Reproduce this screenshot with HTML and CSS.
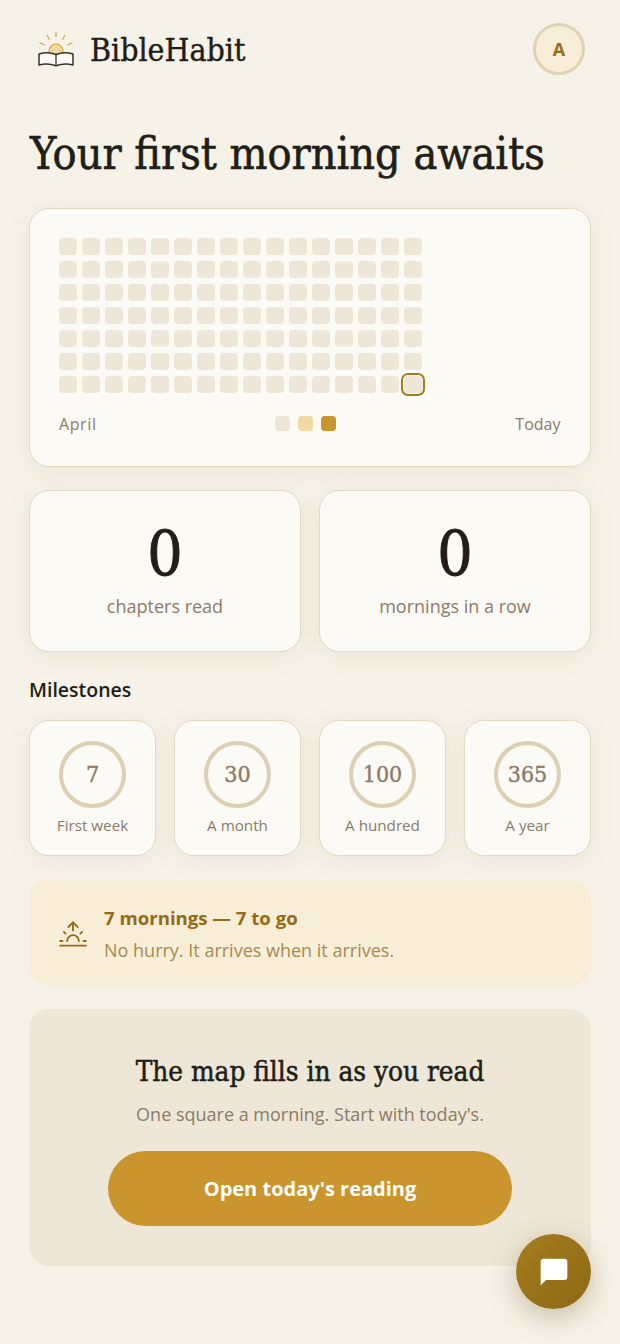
FILE: index.html
```html
<!DOCTYPE html>
<html lang="en">
  <head>
    <meta charset="UTF-8" />
    <meta name="viewport" content="width=device-width, initial-scale=1.0" />
    <title>BibleHabit</title>
    <link rel="stylesheet" href="styles.css">
  </head>
  <body>
    <div class="page">
      <header class="top-bar">
        <div class="brand">
          <svg class="brand-icon" viewBox="0 0 36 36" width="36" height="36" fill="none">
            <circle cx="18" cy="20" r="7" fill="#f0d9a3" stroke="#d9a441" stroke-width="1.2" />
            <path d="M18 1.700v4M9 4.300l2.300 4M27 4.300l-2.300 4M2 11.700l4.300 2.300M34 11.700l-4.300 2.300" stroke="#dba94a" stroke-width="1.300" stroke-linecap="round" />
            <path d="M1 23c6-1.800 12-1.500 17 .5 5-2 11-2.300 17-.5v11c-6-1.600-12-1.200-17 .8-5-2-11-2.400-17-.8z" fill="#fcfaf5" stroke="#3a352c" stroke-width="1.500" stroke-linejoin="round" />
            <path d="M18 23.500v11.300" stroke="#3a352c" stroke-width="1.300" />
          </svg>
          <span class="brand-name">BibleHabit</span>
        </div>
        <div class="avatar">A</div>
      </header>

      <h1 class="page-title">Your first morning awaits</h1>

      <section class="card map-card">
        <div class="day-grid">
          <span></span><span></span><span></span><span></span><span></span><span></span><span></span><span></span><span></span><span></span><span></span><span></span><span></span><span></span><span></span><span></span>
          <span></span><span></span><span></span><span></span><span></span><span></span><span></span><span></span><span></span><span></span><span></span><span></span><span></span><span></span><span></span><span></span>
          <span></span><span></span><span></span><span></span><span></span><span></span><span></span><span></span><span></span><span></span><span></span><span></span><span></span><span></span><span></span><span></span>
          <span></span><span></span><span></span><span></span><span></span><span></span><span></span><span></span><span></span><span></span><span></span><span></span><span></span><span></span><span></span><span></span>
          <span></span><span></span><span></span><span></span><span></span><span></span><span></span><span></span><span></span><span></span><span></span><span></span><span></span><span></span><span></span><span></span>
          <span></span><span></span><span></span><span></span><span></span><span></span><span></span><span></span><span></span><span></span><span></span><span></span><span></span><span></span><span></span><span></span>
          <span></span><span></span><span></span><span></span><span></span><span></span><span></span><span></span><span></span><span></span><span></span><span></span><span></span><span></span><span></span><span class="today"></span>
        </div>
        <div class="map-footer">
          <span class="month">April</span>
          <div class="legend">
            <i class="level-0"></i>
            <i class="level-1"></i>
            <i class="level-2"></i>
          </div>
          <span>Today</span>
        </div>
      </section>

      <section class="stats">
        <div class="card stat-card">
          <div class="stat-value">0</div>
          <div class="stat-label">chapters read</div>
        </div>
        <div class="card stat-card">
          <div class="stat-value">0</div>
          <div class="stat-label">mornings in a row</div>
        </div>
      </section>

      <h2 class="section-title">Milestones</h2>
      <section class="milestones">
        <div class="card milestone">
          <div class="ring">7</div>
          <div class="milestone-label">First week</div>
        </div>
        <div class="card milestone">
          <div class="ring">30</div>
          <div class="milestone-label">A month</div>
        </div>
        <div class="card milestone">
          <div class="ring">100</div>
          <div class="milestone-label">A hundred</div>
        </div>
        <div class="card milestone">
          <div class="ring">365</div>
          <div class="milestone-label">A year</div>
        </div>
      </section>

      <section class="next-up">
        <svg class="next-icon" viewBox="0 0 24 24" width="28" height="28" fill="none" stroke="#966a12" stroke-width="1.600" stroke-linecap="round" stroke-linejoin="round">
          <path d="M17 18a5 5 0 0 0-10 0" />
          <path d="M12 2v7" />
          <path d="M4.220 10.220l1.420 1.420" />
          <path d="M1 18h2" />
          <path d="M21 18h2" />
          <path d="M18.360 11.640l1.420-1.420" />
          <path d="M1 22h22" />
          <path d="M8 6l4-4 4 4" />
        </svg>
        <div>
          <div class="next-title">7 mornings — 7 to go</div>
          <div class="next-note">No hurry. It arrives when it arrives.</div>
        </div>
      </section>

      <section class="cta">
        <h3 class="cta-title">The map fills in as you read</h3>
        <p class="cta-note">One square a morning. Start with today's.</p>
        <button class="cta-button">Open today's reading</button>
      </section>
    </div>

    <button class="chat-button" aria-label="Chat">
      <svg viewBox="0 0 24 24" width="32" height="32" fill="#fff">
        <path d="M20 2H4c-1.100 0-2 .9-2 2v18l4-4h14c1.100 0 2-.9 2-2V4c0-1.100-.9-2-2-2z" />
      </svg>
    </button>
  </body>
</html>
```

FILE: styles.css
```css
* {
  box-sizing: border-box;
}

body {
  margin: 0;
  background-color: #f6f2e8;
  font-family: "Open Sans", Arial, sans-serif;
  color: #221e17;
}

.page {
  padding: 23px 29px 0;
}

.top-bar {
  display: flex;
  justify-content: space-between;
  align-items: center;
  padding: 0 6px 0 9px;
}

.brand {
  display: flex;
  align-items: center;
  gap: 16px;
}

.brand-icon {
  display: block;
}

.brand-name {
  font-family: "DejaVu Serif Condensed", "DejaVu Serif", serif;
  font-size: 31.800px;
  color: #221e17;
  -webkit-text-stroke: 0.4px #221e17;
}

.avatar {
  width: 52px;
  height: 52px;
  border: 3px solid #dfd2b5;
  border-radius: 50%;
  background-color: #f8eed8;
  color: #9a6c14;
  font-size: 18px;
  font-weight: 700;
  display: flex;
  justify-content: center;
  align-items: center;
}

.page-title {
  margin: 49px 0 24px 1px;
  font-family: "DejaVu Serif Condensed", "DejaVu Serif", serif;
  font-size: 44.500px;
  line-height: 60px;
  font-weight: 400;
  color: #221e17;
  -webkit-text-stroke: 0.6px #221e17;
}

.card {
  background-color: #fcfaf5;
  border: 1.5px solid #e4d9c0;
  border-radius: 20px;
  box-shadow: 0 4px 24px rgba(120, 95, 40, 0.09);
}

.map-card {
  height: 259px;
  padding: 28.500px 29.500px 0 29px;
}

.day-grid {
  display: grid;
  grid-template-columns: repeat(16, 17.5px);
  grid-auto-rows: 17.5px;
  gap: 5.5px;
}

.day-grid span {
  background-color: #eee7d7;
  border-radius: 4px;
}

.day-grid .today {
  outline: 2px solid #a67c20;
  outline-offset: 1px;
}

.map-footer {
  display: flex;
  justify-content: space-between;
  align-items: center;
  margin-top: 19.500px;
  font-size: 16px;
  line-height: 22px;
  color: #8b7b68;
}

.month {
  letter-spacing: 0.6px;
}

.legend {
  display: flex;
  gap: 8px;
}

.legend i {
  display: block;
  width: 15px;
  height: 15px;
  border-radius: 4px;
}

.level-0 {
  background-color: #eee7d7;
}

.level-1 {
  background-color: #f0d9a3;
}

.level-2 {
  background-color: #c9952c;
}

.stats {
  display: grid;
  grid-template-columns: 1fr 1fr;
  gap: 18px;
  margin-top: 23px;
}

.stat-card {
  height: 162px;
  padding-top: 23px;
  text-align: center;
}

.stat-value {
  font-family: "DejaVu Serif Condensed", "DejaVu Serif", serif;
  font-size: 62px;
  line-height: 80px;
  color: #221e17;
  -webkit-text-stroke: 1px #221e17;
}

.stat-label {
  margin-top: -1px;
  font-size: 18px;
  line-height: 26px;
  color: #8b7b68;
}

.section-title {
  margin: 25px 0 17px;
  font-size: 19.500px;
  line-height: 26px;
  font-weight: 600;
  color: #221e17;
}

.milestones {
  display: grid;
  grid-template-columns: repeat(4, 1fr);
  gap: 18px;
}

.milestone {
  height: 136px;
  padding-top: 19.500px;
  display: flex;
  flex-direction: column;
  align-items: center;
}

.ring {
  width: 67px;
  height: 67px;
  border: 4px solid #dccfb3;
  border-radius: 50%;
  display: flex;
  justify-content: center;
  align-items: center;
  font-family: "DejaVu Serif Condensed", "DejaVu Serif", serif;
  font-size: 23px;
  color: #8b7b68;
  -webkit-text-stroke: 0.4px #8b7b68;
}

.milestone-label {
  margin-top: 7px;
  font-size: 15.200px;
  line-height: 20px;
  color: #8b7b68;
}

.next-up {
  display: flex;
  align-items: center;
  gap: 17px;
  height: 106px;
  margin-top: 24px;
  padding: 2px 30px 0;
  background-color: #f8eed8;
  border-radius: 20px;
}

.next-icon {
  display: block;
  flex-shrink: 0;
}

.next-title {
  font-size: 18.600px;
  line-height: 26px;
  font-weight: 700;
  color: #966a12;
}

.next-note {
  margin-top: 6px;
  font-size: 18px;
  line-height: 26px;
  color: #a88a4e;
}

.cta {
  height: 257px;
  margin-top: 23px;
  padding-top: 42px;
  background-color: #eee7d7;
  border-radius: 20px;
  text-align: center;
}

.cta-title {
  margin: 0;
  font-family: "DejaVu Serif Condensed", "DejaVu Serif", serif;
  font-size: 27.700px;
  line-height: 42px;
  font-weight: 400;
  color: #221e17;
  -webkit-text-stroke: 0.5px #221e17;
}

.cta-note {
  margin: 8px 0 0;
  font-size: 18px;
  line-height: 26px;
  color: #8b7b68;
}

.cta-button {
  display: block;
  width: 404px;
  height: 75px;
  margin: 24px auto 0;
  border: none;
  border-radius: 38px;
  background-color: #c9952c;
  color: #fff;
  font-family: inherit;
  font-size: 20px;
  font-weight: 700;
}

.chat-button {
  position: fixed;
  right: 29px;
  bottom: 35px;
  width: 75px;
  height: 75px;
  border: none;
  border-radius: 50%;
  padding: 0;
  background: linear-gradient(135deg, #a67c20, #8b6914);
  box-shadow: 0 8px 28px rgba(90, 65, 15, 0.3);
  display: flex;
  justify-content: center;
  align-items: center;
}
```
